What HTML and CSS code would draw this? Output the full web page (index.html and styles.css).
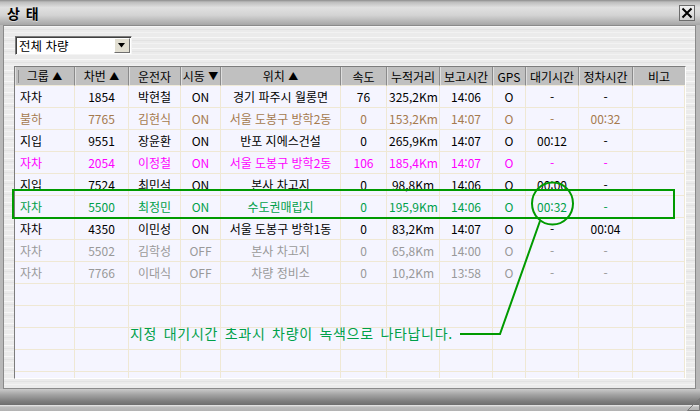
FILE: index.html
```html
<!DOCTYPE html>
<html lang="ko">
<head>
    <meta charset="UTF-8">
    <title>상 태</title>
    <link rel="stylesheet" href="styles.css">
</head>
<body>
    <div class="window">
        <div class="titlebar">
            <span class="title">상 태</span>
            <button class="close-btn">
                <svg width="14" height="14" viewBox="0 0 14 14">
                    <path d="M2.5 2.5 L11.5 11.5 M11.5 2.5 L2.5 11.5" stroke="#000" stroke-width="2" fill="none"/>
                </svg>
            </button>
        </div>

        <div class="panel">
            <div class="select-box">
                <span class="select-text">전체 차량</span>
                <span class="select-arrow">
                    <svg width="8" height="5" viewBox="0 0 8 5"><path d="M0 0 H7 L3.5 4.5 Z" fill="#000"/></svg>
                </span>
            </div>

            <div class="grid-box">
                <table class="grid">
                    <colgroup>
                        <col style="width:60px"><col style="width:54px"><col style="width:52px"><col style="width:40px">
                        <col style="width:120px"><col style="width:46px"><col style="width:53px"><col style="width:53px">
                        <col style="width:33px"><col style="width:53px"><col style="width:54px"><col style="width:52px">
                    </colgroup>
                    <thead>
                        <tr>
                            <th class="first">그룹 <span class="arrow">▲</span></th>
                            <th>차번 <span class="arrow">▲</span></th>
                            <th>운전자</th>
                            <th>시동 <span class="arrow">▼</span></th>
                            <th>위치 <span class="arrow">▲</span></th>
                            <th>속도</th>
                            <th>누적거리</th>
                            <th>보고시간</th>
                            <th>GPS</th>
                            <th>대기시간</th>
                            <th>정차시간</th>
                            <th>비고</th>
                        </tr>
                    </thead>
                    <tbody>
                        <tr><td>자차</td><td>1854</td><td>박현철</td><td>ON</td><td>경기 파주시 월롱면</td><td>76</td><td>325,2Km</td><td>14:06</td><td>O</td><td>-</td><td>-</td><td></td></tr>
                        <tr class="row-brown"><td>불하</td><td>7765</td><td>김현식</td><td>ON</td><td>서울 도봉구 방학2동</td><td>0</td><td>153,2Km</td><td>14:07</td><td>O</td><td>-</td><td>00:32</td><td></td></tr>
                        <tr><td>지입</td><td>9551</td><td>장윤환</td><td>ON</td><td>반포 지에스건설</td><td>0</td><td>265,9Km</td><td>14:07</td><td>O</td><td>00:12</td><td>-</td><td></td></tr>
                        <tr class="row-pink"><td>자차</td><td>2054</td><td>이정철</td><td>ON</td><td>서울 도봉구 방학2동</td><td>106</td><td>185,4Km</td><td>14:07</td><td>O</td><td>-</td><td>-</td><td></td></tr>
                        <tr><td>지입</td><td>7524</td><td>최민석</td><td>ON</td><td>본사 차고지</td><td>0</td><td>98,8Km</td><td>14:06</td><td>O</td><td>00:00</td><td>-</td><td></td></tr>
                        <tr class="row-green"><td>자차</td><td>5500</td><td>최정민</td><td>ON</td><td>수도권매립지</td><td>0</td><td>195,9Km</td><td>14:06</td><td>O</td><td>00:32</td><td>-</td><td></td></tr>
                        <tr><td>자차</td><td>4350</td><td>이민성</td><td>ON</td><td>서울 도봉구 방학1동</td><td>0</td><td>83,2Km</td><td>14:07</td><td>O</td><td>-</td><td>00:04</td><td></td></tr>
                        <tr class="row-gray"><td>자차</td><td>5502</td><td>김학성</td><td>OFF</td><td>본사 차고지</td><td>0</td><td>65,8Km</td><td>14:00</td><td>O</td><td>-</td><td>-</td><td></td></tr>
                        <tr class="row-gray"><td>자차</td><td>7766</td><td>이대식</td><td>OFF</td><td>차량 정비소</td><td>0</td><td>10,2Km</td><td>13:58</td><td>O</td><td>-</td><td>-</td><td></td></tr>
                        <tr><td></td><td></td><td></td><td></td><td></td><td></td><td></td><td></td><td></td><td></td><td></td><td></td></tr>
                        <tr><td></td><td></td><td></td><td></td><td></td><td></td><td></td><td></td><td></td><td></td><td></td><td></td></tr>
                        <tr><td></td><td></td><td></td><td></td><td></td><td></td><td></td><td></td><td></td><td></td><td></td><td></td></tr>
                        <tr><td></td><td></td><td></td><td></td><td></td><td></td><td></td><td></td><td></td><td></td><td></td><td></td></tr>
                        <tr><td></td><td></td><td></td><td></td><td></td><td></td><td></td><td></td><td></td><td></td><td></td><td></td></tr>
                    </tbody>
                </table>
            </div>
        </div>

        <div class="statusbar">
            <svg class="grip" width="13" height="13" viewBox="0 0 13 13">
                <path d="M0.5 12.5 L12.5 0.5 V12.5 Z" fill="none" stroke="#7a7a7a" stroke-width="1"/>
            </svg>
        </div>

        <!-- green callout over the list -->
        <svg class="callout" width="700" height="411" viewBox="0 0 700 411">
            <rect x="13" y="190" width="661" height="28" fill="none" stroke="#009a00" stroke-width="2"/>
            <ellipse cx="552.5" cy="203.5" rx="20.5" ry="21" fill="none" stroke="#009a00" stroke-width="2"/>
            <polyline points="540,221 500,334 460,334" fill="none" stroke="#009a00" stroke-width="2"/>
        </svg>
        <div class="callout-text">지정 대기시간 초과시 차량이 녹색으로 나타납니다.</div>
    </div>
</body>
</html>
```

FILE: styles.css
```css
* {
    box-sizing: border-box;
}
body {
    margin: 0;
    width: 700px;
    height: 411px;
    overflow: hidden;
    font-family: "Noto Sans CJK KR", "Noto Sans", sans-serif;
    font-size: 12px;
    color: #000;
}
.window {
    position: relative;
    width: 700px;
    height: 411px;
    display: flex;
    flex-direction: column;
    background: #b8b8b8;
}
.titlebar {
    height: 25px;
    flex: none;
    display: flex;
    align-items: center;
    justify-content: space-between;
    padding: 0 5px 0 7px;
    background: linear-gradient(#8c8c8c 0, #bcbcbc 2px, #e0e0e0 30%, #d4d4d4 60%, #a6a6a6 100%);
}
.title {
    font-size: 14px;
    font-weight: bold;
    letter-spacing: 1px;
    text-shadow: 0 1px 0 rgba(255,255,255,0.5);
}
.close-btn {
    width: 16px;
    height: 16px;
    padding: 0;
    border: 1px solid #6c6c6c;
    background: linear-gradient(#f2f2f2, #cfcfcf);
    display: flex;
    align-items: center;
    justify-content: center;
}
.panel {
    flex: 1;
    margin: 0 4px 0 3px;
    border: 1px solid #8a8a8a;
    padding: 10px 7px 9px 10px;
    display: flex;
    flex-direction: column;
    gap: 11px;
    background-color: #ebebeb;
    background-image: repeating-linear-gradient(180deg,
        rgba(255,255,255,0.6) 0 1px, rgba(0,0,0,0) 1px 3px,
        rgba(0,0,0,0.04) 3px 4px, rgba(0,0,0,0) 4px 6px,
        rgba(255,255,255,0.35) 6px 7px, rgba(0,0,0,0) 7px 11px);
}
.select-box {
    width: 117px;
    height: 19px;
    margin-left: 1px;
    flex: none;
    display: flex;
    align-items: center;
    justify-content: space-between;
    padding: 1px 1px 1px 3px;
    background: #fff;
    border: 1px solid;
    border-color: #7a7a7a #f4f4f4 #f4f4f4 #7a7a7a;
    box-shadow: inset 1px 1px 0 #404040;
}
.select-text {
    line-height: 15px;
    font-size: 12.5px;
}
.select-arrow {
    width: 16px;
    height: 15px;
    display: flex;
    align-items: center;
    justify-content: center;
    background: #e2dfd2;
    border: 1px solid;
    border-color: #fff #6f6f6f #6f6f6f #fff;
}
.grid-box {
    width: 672px;
    height: 313px;
    flex: none;
    overflow: hidden;
    background: #f5f5ff;
    border: 1px solid;
    border-color: #7c7c7c #fff #fff #7c7c7c;
}
.grid {
    width: 670px;
    table-layout: fixed;
    border-collapse: separate;
    border-spacing: 0;
}
.grid th {
    height: 18px;
    padding: 0;
    font-weight: normal;
    line-height: 17px;
    white-space: nowrap;
    background: #c0c0c0;
    border-right: 1px solid #8a8a8a;
    border-bottom: 1px solid #f0ebd9;
    box-shadow: inset 1px 0 0 #dedede;
}
.grid th.first {
    background-image: linear-gradient(to right, transparent 3px, #8a8a8a 3px, #8a8a8a 4px, transparent 4px);
    background-size: 100% 13px;
    background-position: 0 center;
    background-repeat: no-repeat;
}
.grid th:last-child {
    border-right: none;
}
.arrow {
    font-size: 10px;
    position: relative;
    top: -1px;
}
.grid td {
    height: 22px;
    padding: 0 2px;
    line-height: 21px;
    text-align: center;
    white-space: nowrap;
    overflow: hidden;
    border-right: 1px solid #efe8d4;
    border-bottom: 1px solid #efe8d4;
}
.grid td:first-child {
    text-align: left;
    padding-left: 5px;
}
.row-brown td {
    color: #a57a4e;
}
.row-pink td {
    color: #ff00ff;
}
.row-green td {
    color: #00a04a;
}
.row-gray td {
    color: #999;
}
.statusbar {
    height: 22px;
    flex: none;
    display: flex;
    justify-content: flex-end;
    align-items: flex-end;
    background: linear-gradient(#cacaca 0, #a4a4a4 25%, #7e7e7e 55%, #6e6e6e 72%, #e0e0e0 75%, #bcbcbc 82%, #b2b2b2 100%);
}
.grip {
    display: block;
}
.callout {
    position: absolute;
    left: 0;
    top: 0;
    pointer-events: none;
}
.callout-text {
    position: absolute;
    left: 130px;
    top: 324px;
    font-size: 14px;
    line-height: 18px;
    letter-spacing: 0.7px;
    word-spacing: 2px;
    color: #00a04a;
    white-space: nowrap;
}
```
